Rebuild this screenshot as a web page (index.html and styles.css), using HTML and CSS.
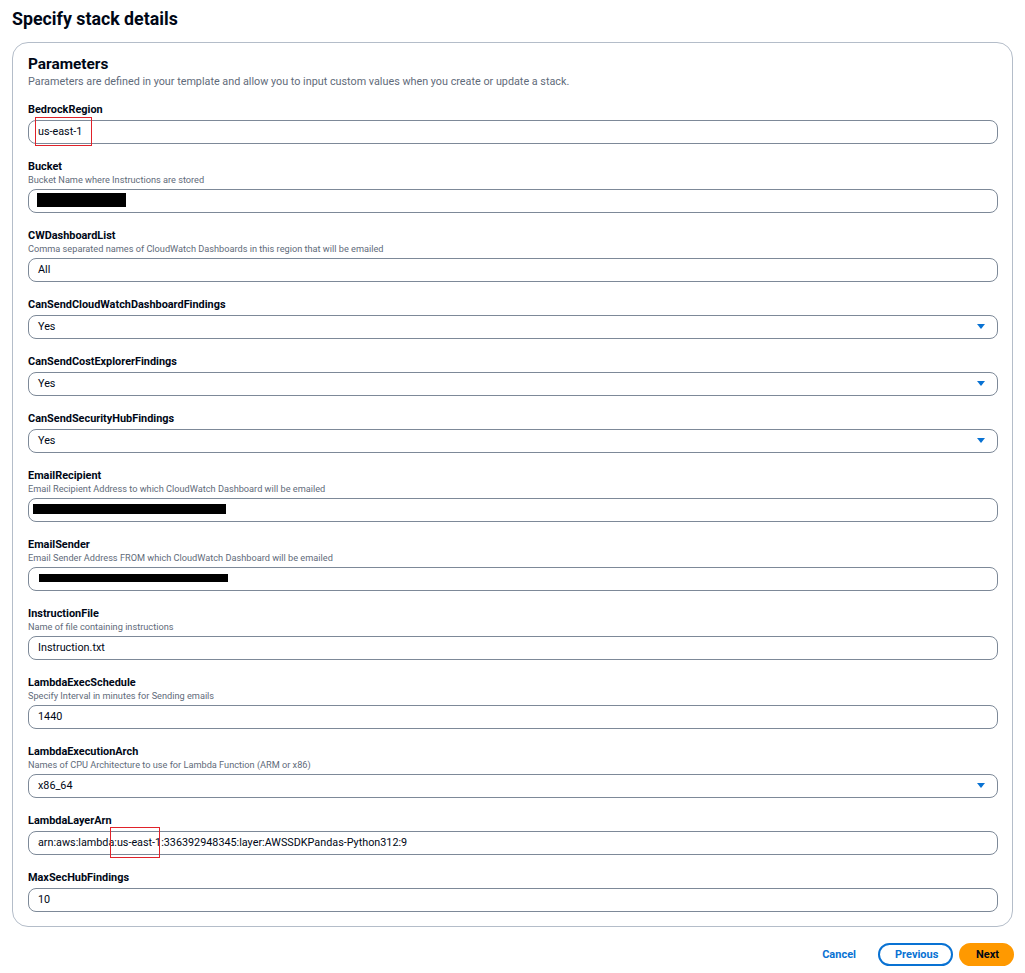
FILE: index.html
```html
<!DOCTYPE html>
<html lang="en">
<head>
<meta charset="utf-8">
<title>Specify stack details</title>
<link rel="stylesheet" href="styles.css">
</head>
<body>
<div class="page">
  <h1 class="title">Specify stack details</h1>
  <section class="panel">
    <h2 class="panel-title">Parameters</h2>
    <p class="panel-desc">Parameters are defined in your template and allow you to input custom values when you create or update a stack.</p>
    <div class="fields">
      <div class="field">
        <div class="label">BedrockRegion</div>
        <div class="control"><span class="value">us-east-1</span><span class="mark mark-region"></span></div>
      </div>
      <div class="field">
        <div class="label">Bucket</div>
        <div class="desc">Bucket Name where Instructions are stored</div>
        <div class="control"><span class="redact redact-bucket"></span></div>
      </div>
      <div class="field">
        <div class="label">CWDashboardList</div>
        <div class="desc">Comma separated names of CloudWatch Dashboards in this region that will be emailed</div>
        <div class="control"><span class="value">All</span></div>
      </div>
      <div class="field">
        <div class="label">CanSendCloudWatchDashboardFindings</div>
        <div class="control select"><span class="value">Yes</span><span class="caret"></span></div>
      </div>
      <div class="field">
        <div class="label">CanSendCostExplorerFindings</div>
        <div class="control select"><span class="value">Yes</span><span class="caret"></span></div>
      </div>
      <div class="field">
        <div class="label">CanSendSecurityHubFindings</div>
        <div class="control select"><span class="value">Yes</span><span class="caret"></span></div>
      </div>
      <div class="field">
        <div class="label">EmailRecipient</div>
        <div class="desc">Email Recipient Address to which CloudWatch Dashboard will be emailed</div>
        <div class="control"><span class="redact redact-recipient"></span></div>
      </div>
      <div class="field">
        <div class="label">EmailSender</div>
        <div class="desc">Email Sender Address FROM which CloudWatch Dashboard will be emailed</div>
        <div class="control"><span class="redact redact-sender"></span></div>
      </div>
      <div class="field">
        <div class="label">InstructionFile</div>
        <div class="desc">Name of file containing instructions</div>
        <div class="control"><span class="value">Instruction.txt</span></div>
      </div>
      <div class="field">
        <div class="label">LambdaExecSchedule</div>
        <div class="desc">Specify Interval in minutes for Sending emails</div>
        <div class="control"><span class="value">1440</span></div>
      </div>
      <div class="field">
        <div class="label">LambdaExecutionArch</div>
        <div class="desc">Names of CPU Architecture to use for Lambda Function (ARM or x86)</div>
        <div class="control select"><span class="value">x86_64</span><span class="caret"></span></div>
      </div>
      <div class="field">
        <div class="label">LambdaLayerArn</div>
        <div class="control"><span class="value">arn:aws:lambda:us-east-1:336392948345:layer:AWSSDKPandas-Python312:9</span><span class="mark mark-arn"></span></div>
      </div>
      <div class="field">
        <div class="label">MaxSecHubFindings</div>
        <div class="control"><span class="value">10</span></div>
      </div>
    </div>
  </section>
  <div class="actions">
    <button class="btn btn-link" type="button">Cancel</button>
    <button class="btn btn-normal" type="button">Previous</button>
    <button class="btn btn-primary" type="button">Next</button>
  </div>
</div>
</body>
</html>
```
FILE: styles.css
```css
* { box-sizing: border-box; }
body {
  margin: 0;
  background: #ffffff;
  font-family: Roboto, "Liberation Sans", Arial, sans-serif;
  color: #000716;
}
.page {
  padding: 7px 12px 0 12px;
}
.title {
  margin: 0;
  font-size: 17.8px;
  line-height: 24px;
  font-weight: 700;
  color: #000716;
}
.panel {
  margin-top: 11px;
  border: 1px solid #b4bdc9;
  border-radius: 16px;
  padding: 11px 14px 14px 15px;
}
.panel-title {
  margin: 0;
  font-size: 15.4px;
  line-height: 20px;
  font-weight: 700;
}
.panel-desc {
  margin: 0;
  font-size: 10.8px;
  line-height: 16px;
  color: #5f6b7a;
}
.fields {
  margin-top: 12px;
  display: flex;
  flex-direction: column;
  gap: 15px;
}
.field {
  display: flex;
  flex-direction: column;
}
.label {
  padding-top: 1px;
  font-size: 10.9px;
  line-height: 14px;
  font-weight: 700;
  color: #000716;
}
.desc {
  font-size: 9.2px;
  line-height: 14px;
  margin-top: -1px;
  margin-bottom: -1px;
  color: #5f6b7a;
}
.control {
  position: relative;
  margin-top: 3px;
  height: 24px;
  border: 1px solid #7d8998;
  border-radius: 8px;
  padding: 0 9px 1px 9px;
  display: flex;
  align-items: center;
  font-size: 10.8px;
  color: #000716;
}
.value { flex: 1; white-space: nowrap; }
.caret {
  width: 0;
  height: 0;
  border-left: 4px solid transparent;
  border-right: 4px solid transparent;
  border-top: 5px solid #0972d3;
  margin-right: 3px;
}
.redact {
  position: absolute;
  background: #000000;
}
.redact-bucket { left: 8px; top: 3px; width: 89px; height: 14px; }
.redact-recipient { left: 4px; top: 5px; width: 193px; height: 10px; }
.redact-sender { left: 10px; top: 6px; width: 189px; height: 8px; }
.mark {
  position: absolute;
  border: 1px solid #e0222a;
}
.mark-region { left: 6px; top: -4px; width: 57px; height: 29px; }
.mark-arn { left: 81px; top: -5px; width: 50px; height: 31px; }
.actions {
  margin-top: 16px;
  margin-right: -1px;
  display: flex;
  justify-content: flex-end;
  align-items: center;
  gap: 6px;
}
.btn {
  font-family: Roboto, "Liberation Sans", Arial, sans-serif;
  font-size: 11px;
  font-weight: 700;
  height: 23px;
  border-radius: 12px;
  border: 2px solid transparent;
  cursor: pointer;
  padding: 0 15px;
  line-height: 19px;
}
.btn-link {
  background: transparent;
  color: #0972d3;
  margin-right: -1px;
}
.btn-normal {
  background: #ffffff;
  border-color: #0972d3;
  color: #0972d3;
  width: 75px;
}
.btn-primary {
  background: #ff9900;
  border-color: #ff9900;
  color: #000716;
  width: 55px;
}
```
